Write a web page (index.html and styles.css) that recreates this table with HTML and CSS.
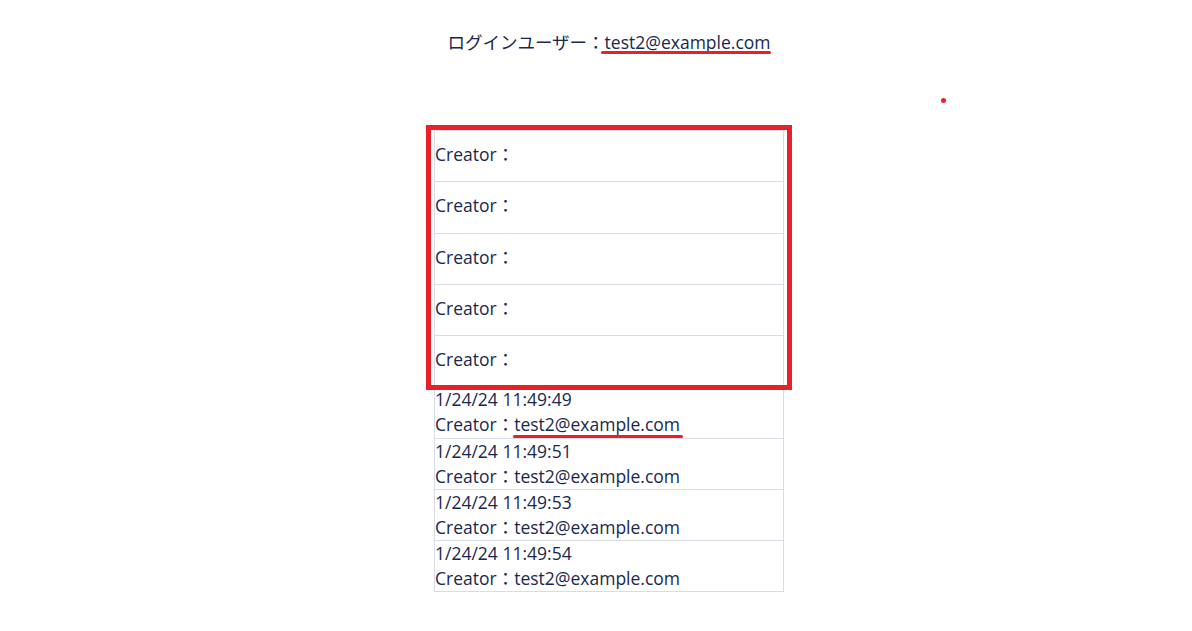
FILE: index.html
```html
<!DOCTYPE html>
<html lang="ja">
<head>
<meta charset="utf-8">
<link rel="stylesheet" href="styles.css">
</head>
<body>
<div class="page">
  <h1 class="title">ログインユーザー：<span class="mark mark-title">test2@example.com</span></h1>
  <span class="dot"></span>
  <div class="list">
    <div class="row row-empty"><div class="line">Creator：</div></div>
    <div class="row row-empty"><div class="line">Creator：</div></div>
    <div class="row row-empty"><div class="line">Creator：</div></div>
    <div class="row row-empty"><div class="line">Creator：</div></div>
    <div class="row row-empty"><div class="line">Creator：</div></div>
    <div class="row"><div class="line">1/24/24 11:49:49</div><div class="line">Creator：<span class="mark">test2@example.com</span></div></div>
    <div class="row"><div class="line">1/24/24 11:49:51</div><div class="line">Creator：test2@example.com</div></div>
    <div class="row"><div class="line">1/24/24 11:49:53</div><div class="line">Creator：test2@example.com</div></div>
    <div class="row"><div class="line">1/24/24 11:49:54</div><div class="line">Creator：test2@example.com</div></div>
    <div class="highlight"></div>
  </div>
</div>
</body>
</html>
```
FILE: styles.css
```css
html, body {
  margin: 0;
  padding: 0;
  background: #ffffff;
}
body {
  font-family: "Open Sans", "Noto Sans CJK JP", sans-serif;
  color: #1a2850;
  font-size: 17.5px;
}
.page {
  position: relative;
  width: 1192px;
  height: 631px;
  padding-left: 26px;
  box-sizing: border-box;
  display: flex;
  flex-direction: column;
  align-items: center;
}
.title {
  margin: 30px 0 0;
  font-size: 17.5px;
  font-weight: 400;
  line-height: 25px;
}
.mark {
  position: relative;
}
.mark::after {
  content: "";
  position: absolute;
  left: -1px;
  right: -3px;
  bottom: -2px;
  height: 3px;
  border-radius: 2px;
  background: #e8202a;
}
.mark-title::after {
  left: -4px;
  right: 0;
  bottom: 0;
}
.dot {
  position: absolute;
  left: 941px;
  top: 98px;
  width: 5px;
  height: 5px;
  border-radius: 50%;
  background: #e8202a;
}
.list {
  position: relative;
  margin-top: 75px;
  width: 350px;
  border: 1px solid #d9dce4;
  border-bottom: none;
  box-sizing: border-box;
}
.row {
  height: 51.25px;
  border-bottom: 1px solid #d9dce4;
  box-sizing: border-box;
  display: flex;
  flex-direction: column;
  justify-content: center;
}
.row-empty {
  padding-bottom: 3px;
}
.line {
  line-height: 25px;
  white-space: nowrap;
}
.highlight {
  position: absolute;
  left: -9px;
  top: -6px;
  width: 366px;
  height: 265px;
  border: 5px solid #e8202a;
  box-sizing: border-box;
}
```
